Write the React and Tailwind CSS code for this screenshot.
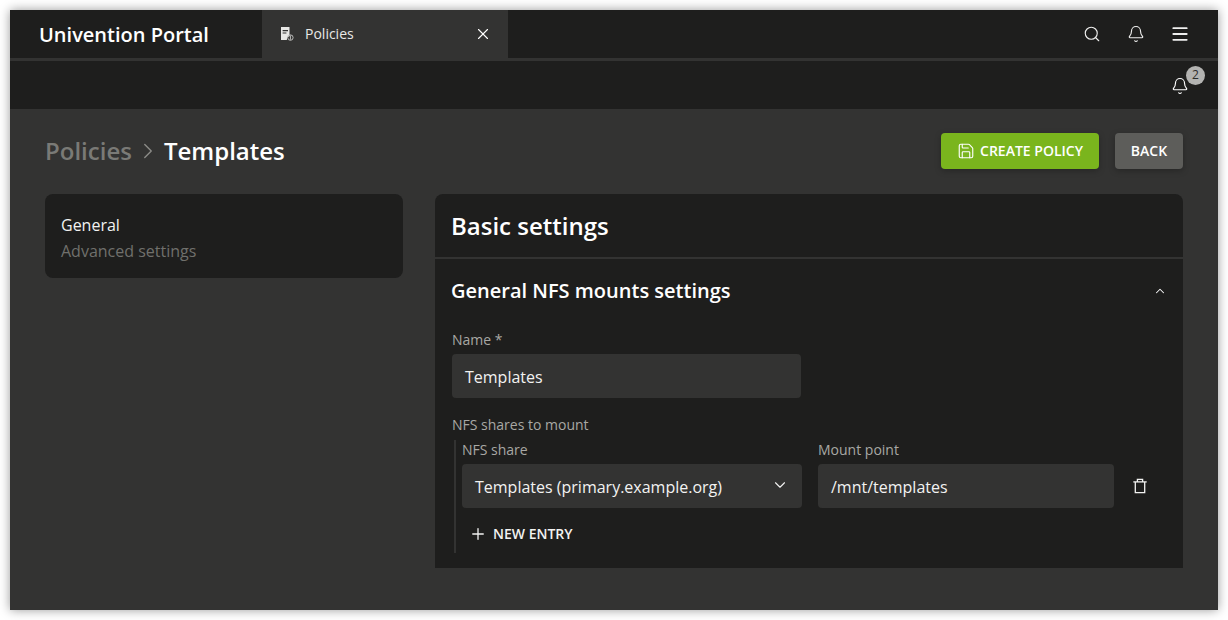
import React from 'react';
import { Search, Bell, Menu, X, ChevronRight, ChevronDown, ChevronUp, Save, Plus } from 'lucide-react';

const PolicyIcon = () => (
  <svg width="14" height="14" viewBox="0 0 14 14">
    <path d="M1 0h8.5v9.2a3.6 3.6 0 0 0-2.6 3.8H1z" fill="#e8e8e6" />
    <path d="M2.6 3h5.4v1.2H2.6zM2.6 5.4h3.8v1.2H2.6z" fill="#333" />
    <circle cx="10.4" cy="10.6" r="2.7" fill="none" stroke="#bdbdbb" strokeWidth="1" />
    <path d="M10.4 8.4v4.4" stroke="#bdbdbb" strokeWidth="1" />
  </svg>
);

const TrashIcon = () => (
  <svg width="18" height="18" viewBox="0 0 18 18" fill="none" stroke="#f2f2f1" strokeWidth="1.3">
    <path d="M2.3 4.9h13.4" />
    <path d="M6.4 4.9V2.4h5.2v2.5" />
    <path d="M4.3 4.9v10.8h9.4V4.9" />
  </svg>
);

const App = () => {
  return (
    <div className="w-[1228px] h-[620px] bg-white p-[10px] overflow-hidden font-['Open_Sans',sans-serif]">
      <div className="h-[600px] bg-[#333332] flex flex-col shadow-[0_0_10px_rgba(0,0,0,0.4)] overflow-hidden">
        <header className="h-[48px] flex bg-[#1e1e1d] text-white shrink-0">
          <div className="w-[252px] pl-[29px] pt-[2px] flex items-center text-[20px] font-semibold">Univention Portal</div>
          <div className="w-[246px] bg-[#333332] flex items-center pl-[18px] pr-[16px] h-[48px]">
            <PolicyIcon />
            <span className="ml-[11px] text-[14px] text-[#e8e8e6] -mt-[2px]">Policies</span>
            <X size={18} strokeWidth={1.5} className="ml-auto -mt-[1px]" />
          </div>
          <div className="ml-auto flex items-center pr-[28px] text-[#f0f0ef]">
            <Search size={18} strokeWidth={1.5} />
            <Bell size={18} strokeWidth={1.5} className="ml-[26px]" />
            <Menu size={20} strokeWidth={2.25} className="ml-[25px]" />
          </div>
        </header>
        <div className="h-[3px] bg-[#333332] shrink-0" />
        <div className="h-[48px] bg-[#1e1e1d] flex items-center justify-end pr-[29px] shrink-0">
          <div className="relative text-white mt-[1px]">
            <Bell size={18} strokeWidth={1.5} />
            <span className="absolute -top-[11px] left-[15px] w-[19px] h-[19px] rounded-full bg-[#b3b3b1] text-[#2c2c2b] text-[12px] flex items-center justify-center">2</span>
          </div>
        </div>
        <main className="flex-1 px-[35px] pt-[24px]">
          <div className="flex items-center h-[36px]">
            <span className="text-[24px] font-semibold text-[#7a7a76]">Policies</span>
            <ChevronRight size={26} strokeWidth={1.25} className="text-[#8c8c88] mx-[3px]" />
            <span className="text-[24px] font-semibold text-white">Templates</span>
            <button className="ml-auto h-[36px] w-[158px] pb-[1px] rounded bg-[#7ab51d] text-white text-[14px] font-semibold flex items-center justify-center gap-[5px] shadow-[0_2px_6px_rgba(0,0,0,0.25)]">
              <Save size={18} strokeWidth={1.5} />
              CREATE POLICY
            </button>
            <button className="ml-[16px] h-[36px] w-[68px] pb-[1px] rounded bg-[#5d5d5a] text-white text-[14px] font-semibold shadow-[0_2px_6px_rgba(0,0,0,0.25)]">BACK</button>
          </div>
          <div className="flex gap-[32px] mt-[25px] items-start">
            <nav className="w-[358px] h-[84px] bg-[#1e1e1d] rounded-lg px-[16px] pt-[18px] text-[16px] leading-[26px]">
              <div className="text-[#f2f2f1]">General</div>
              <div className="text-[#70706c]">Advanced settings</div>
            </nav>
            <section className="w-[748px] h-[374px] bg-[#1e1e1d] rounded-t-lg text-white">
              <div className="h-[63px] flex items-center px-[16px] text-[24px] font-semibold">Basic settings</div>
              <div className="h-[2px] bg-[#333332]" />
              <div className="h-[63px] flex items-center pl-[16px] pr-[16px] text-[20px] font-semibold">
                General NFS mounts settings
                <ChevronUp size={14} strokeWidth={1.75} className="ml-auto" />
              </div>
              <div className="pl-[17px] pt-[8px]">
                <div className="text-[14px] leading-[20px] text-[#a8a8a4] h-[22px]">Name *</div>
                <div className="mt-[2px] w-[349px] h-[44px] bg-[#333332] rounded flex items-center px-[13px] pt-[2px] text-[16px] text-[#f2f2f1]">Templates</div>
                <div className="mt-[17px] text-[14px] leading-[20px] text-[#a8a8a4]">NFS shares to mount</div>
                <div className="mt-[5px] ml-[2px] border-l-2 border-[#333332] pl-[6px] h-[113px]">
                  <div className="flex gap-[16px]">
                    <div>
                      <div className="text-[14px] leading-[20px] text-[#a8a8a4] h-[22px]">NFS share</div>
                      <div className="mt-[2px] w-[340px] h-[44px] bg-[#333332] rounded flex items-center pl-[13px] pr-[13px] text-[16px] text-[#f2f2f1]">
                        <span className="pt-[1px]">Templates (primary.example.org)</span>
                        <ChevronDown size={18} strokeWidth={1.5} className="ml-auto -mt-[2px]" />
                      </div>
                    </div>
                    <div>
                      <div className="text-[14px] leading-[20px] text-[#a8a8a4] h-[22px]">Mount point</div>
                      <div className="mt-[2px] w-[296px] h-[44px] bg-[#333332] rounded flex items-center px-[13px] pt-[2px] text-[16px] text-[#f2f2f1]">/mnt/templates</div>
                    </div>
                    <div className="pt-[24px] h-[68px] flex items-center pl-[1px]">
                      <TrashIcon />
                    </div>
                  </div>
                  <div className="mt-[15px] ml-[7px] flex items-center gap-[6px] text-[14px] font-semibold text-[#f2f2f1]">
                    <Plus size={18} strokeWidth={1.75} />
                    NEW ENTRY
                  </div>
                </div>
              </div>
            </section>
          </div>
        </main>
      </div>
    </div>
  );
};

export default App;
